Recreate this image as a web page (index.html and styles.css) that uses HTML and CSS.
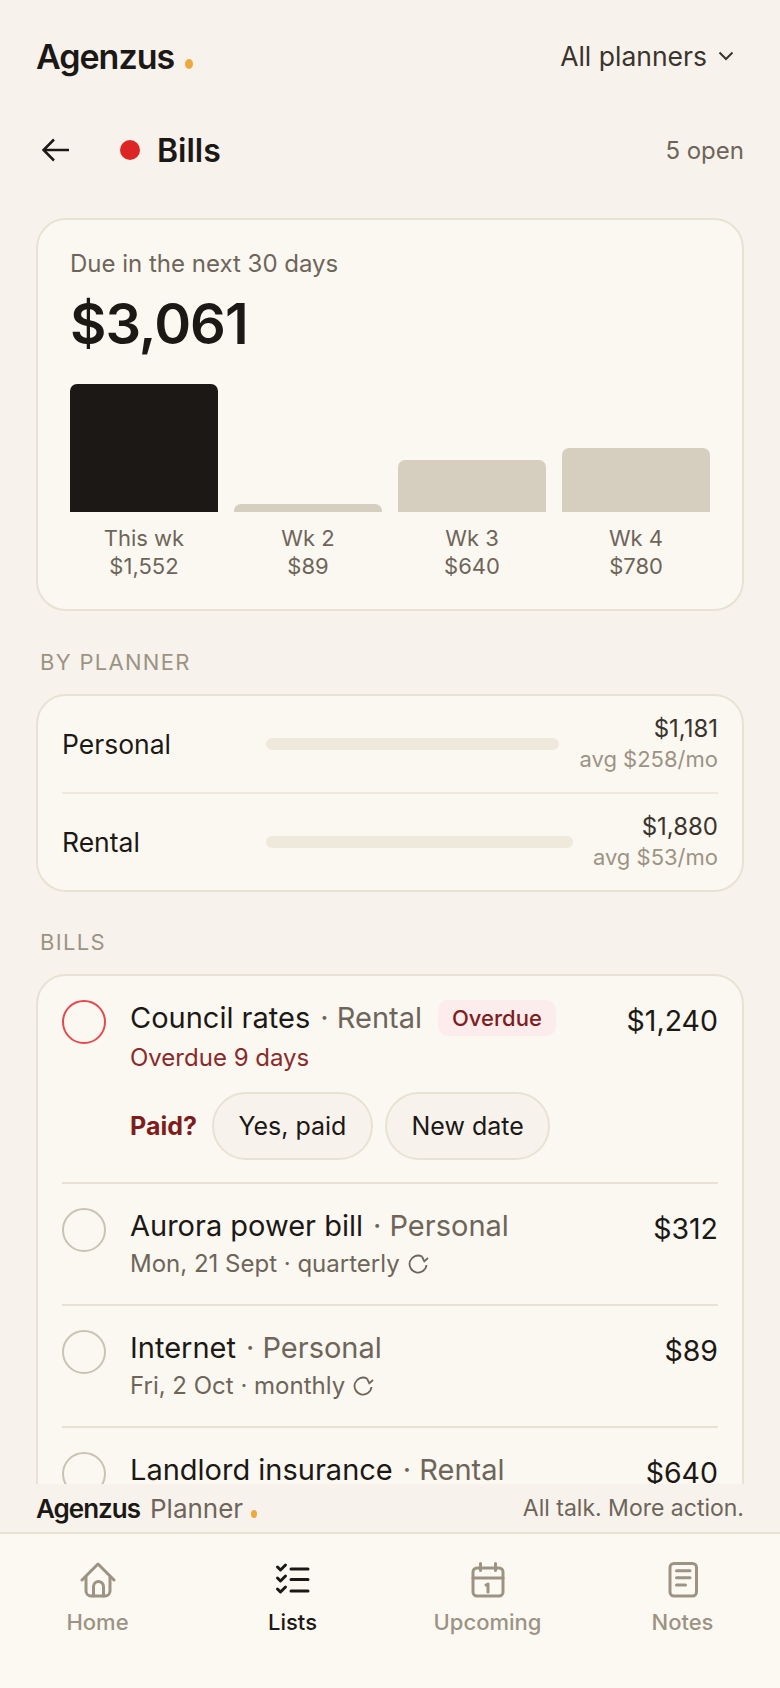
FILE: index.html
```html
<!DOCTYPE html>
<html lang="en">
<head>
    <meta charset="UTF-8">
    <meta name="viewport" content="width=device-width, initial-scale=1.0">
    <title>Agenzus Planner - Bills</title>
    <link rel="stylesheet" href="styles.css">
</head>
<body>
    <div class="main">
        <header class="top-bar">
            <div class="logo">Agenzus<span class="logo-dot"></span></div>
            <div class="planner-select">
                All planners
                <svg class="chevron" viewBox="0 0 16 10"><path d="M1.500 1.500 8 8l6.500-6.500"/></svg>
            </div>
        </header>

        <div class="page-head">
            <svg class="back" viewBox="0 0 28 24"><path d="M27 12H2M12 1.500 1.500 12 12 22.500"/></svg>
            <span class="page-dot"></span>
            <h1>Bills</h1>
            <span class="open-count">5 open</span>
        </div>

        <section class="card summary">
            <div class="summary-label">Due in the next 30 days</div>
            <div class="summary-total">$3,061</div>
            <div class="weeks">
                <div class="week">
                    <div class="bar-wrap"><div class="bar current" style="height: 128px"></div></div>
                    <div class="week-name">This wk</div>
                    <div class="week-amount">$1,552</div>
                </div>
                <div class="week">
                    <div class="bar-wrap"><div class="bar" style="height: 8px"></div></div>
                    <div class="week-name">Wk 2</div>
                    <div class="week-amount">$89</div>
                </div>
                <div class="week">
                    <div class="bar-wrap"><div class="bar" style="height: 52px"></div></div>
                    <div class="week-name">Wk 3</div>
                    <div class="week-amount">$640</div>
                </div>
                <div class="week">
                    <div class="bar-wrap"><div class="bar" style="height: 64px"></div></div>
                    <div class="week-name">Wk 4</div>
                    <div class="week-amount">$780</div>
                </div>
            </div>
        </section>

        <div class="section-label">By planner</div>
        <section class="card planners">
            <div class="planner-row">
                <div class="planner-name">Personal</div>
                <div class="track"></div>
                <div class="planner-nums">
                    <div class="planner-amount">$1,181</div>
                    <div class="planner-avg">avg $258/mo</div>
                </div>
            </div>
            <div class="planner-row">
                <div class="planner-name">Rental</div>
                <div class="track"></div>
                <div class="planner-nums">
                    <div class="planner-amount">$1,880</div>
                    <div class="planner-avg">avg $53/mo</div>
                </div>
            </div>
        </section>

        <div class="section-label bills-label">Bills</div>
        <section class="card bills">
            <div class="bill first">
                <span class="check overdue"></span>
                <div class="bill-body">
                    <div class="bill-title">Council rates <span class="bill-planner">· Rental</span> <span class="badge">Overdue</span></div>
                    <div class="bill-sub late">Overdue 9 days</div>
                    <div class="paid-row">
                        <span class="paid-label">Paid?</span>
                        <button class="pill">Yes, paid</button>
                        <button class="pill">New date</button>
                    </div>
                </div>
                <div class="bill-amount">$1,240</div>
            </div>
            <div class="bill">
                <span class="check"></span>
                <div class="bill-body">
                    <div class="bill-title">Aurora power bill <span class="bill-planner">· Personal</span></div>
                    <div class="bill-sub">Mon, 21 Sept · quarterly
                        <svg class="repeat" viewBox="0 0 21 20"><path d="M18.500 11A8.500 8.500 0 1 1 14 2.500"/><path d="M14 2.500l2.300 4.800L20 4"/></svg>
                    </div>
                </div>
                <div class="bill-amount">$312</div>
            </div>
            <div class="bill">
                <span class="check"></span>
                <div class="bill-body">
                    <div class="bill-title">Internet <span class="bill-planner">· Personal</span></div>
                    <div class="bill-sub">Fri, 2 Oct · monthly
                        <svg class="repeat" viewBox="0 0 21 20"><path d="M18.500 11A8.500 8.500 0 1 1 14 2.500"/><path d="M14 2.500l2.300 4.800L20 4"/></svg>
                    </div>
                </div>
                <div class="bill-amount">$89</div>
            </div>
            <div class="bill">
                <span class="check"></span>
                <div class="bill-body">
                    <div class="bill-title">Landlord insurance <span class="bill-planner">· Rental</span></div>
                </div>
                <div class="bill-amount">$640</div>
            </div>
        </section>
    </div>

    <div class="brand-strip">
        <div class="brand">Agenzus<span class="brand-light">Planner</span><span class="brand-dot"></span></div>
        <div class="tagline">All talk. More action.</div>
    </div>

    <nav class="tab-bar">
        <div class="tab">
            <svg class="tab-icon" viewBox="0 0 36 36"><path d="M2 18 18 2l16 16"/><path d="M6 15v14a5 5 0 0 0 5 5h14a5 5 0 0 0 5-5V15"/><path d="M13.500 34V24.500a5 5 0 0 1 10 0V34"/></svg>
            <span>Home</span>
        </div>
        <div class="tab active">
            <svg class="tab-icon" viewBox="0 0 36 36"><path d="M16 7h17M16 17.500h17M16 29h17"/><path d="M2.500 5l3 3L10.500 3M2.500 16l3 3 5-5M2.500 27l3 3 5-5"/></svg>
            <span>Lists</span>
        </div>
        <div class="tab">
            <svg class="tab-icon" viewBox="0 0 36 36"><rect x="3" y="6" width="30" height="28" rx="4"/><path d="M3 16h30M10.500 1.500v7M25.500 1.500v7M16 23l2-1v8"/></svg>
            <span>Upcoming</span>
        </div>
        <div class="tab">
            <svg class="tab-icon" viewBox="0 0 36 36"><rect x="5" y="1.500" width="26.500" height="32.500" rx="4"/><path d="M11.500 8.700h13.500M11.500 15.700h13.500M11.500 23h9"/></svg>
            <span>Notes</span>
        </div>
    </nav>
</body>
</html>
```
FILE: styles.css
```css
* {
    box-sizing: border-box;
}

body {
    margin: 0;
    height: 1688px;
    display: flex;
    flex-direction: column;
    overflow: hidden;
    font-family: Inter, "Noto Sans", sans-serif;
    background-color: #f7f3ec;
    color: #1c1815;
}

.main {
    flex: 1;
    min-height: 0;
    overflow: hidden;
    padding: 0 36px;
}

/* Top bar */
.top-bar {
    height: 112px;
    display: flex;
    justify-content: space-between;
    align-items: center;
}

.logo {
    font-size: 34px;
    font-weight: 600;
    letter-spacing: -1px;
}

.logo-dot {
    display: inline-block;
    width: 8px;
    height: 10px;
    margin-left: 11px;
    border-radius: 50%;
    background-color: #eda93d;
}

.planner-select {
    display: flex;
    align-items: center;
    gap: 11px;
    font-size: 26.500px;
    color: #3a342d;
}

.chevron {
    width: 16px;
    height: 10px;
    margin-right: 10px;
    fill: none;
    stroke: #3a342d;
    stroke-width: 2;
}

/* Page heading */
.page-head {
    height: 76px;
    display: flex;
    align-items: center;
}

.back {
    width: 28px;
    height: 24px;
    margin-left: 6px;
    fill: none;
    stroke: #1c1815;
    stroke-width: 2.500;
}

.page-dot {
    width: 20px;
    height: 20px;
    margin-left: 50px;
    border-radius: 50%;
    background-color: #dc2626;
}

h1 {
    margin: 0 0 0 17px;
    font-size: 32px;
    font-weight: 600;
}

.open-count {
    margin-left: auto;
    font-size: 24px;
    color: #6e655a;
}

/* Cards */
.card {
    background-color: #fbf8f1;
    border: 2px solid #e8e2d4;
    border-radius: 30px;
}

.summary {
    margin-top: 30px;
    height: 393px;
    padding: 30px 32px 0;
}

.summary-label {
    font-size: 24px;
    line-height: 28px;
    color: #6e655a;
}

.summary-total {
    margin-top: 13px;
    font-size: 56px;
    line-height: 66px;
    font-weight: 600;
    letter-spacing: -1px;
}

.weeks {
    margin-top: 27px;
    display: flex;
    gap: 16px;
}

.week {
    flex: 1;
    text-align: center;
    font-size: 22px;
    line-height: 28px;
    color: #6e655a;
}

.bar-wrap {
    height: 128px;
    margin-bottom: 12px;
    display: flex;
    align-items: flex-end;
}

.bar {
    width: 100%;
    background-color: #d6cfc0;
    border-radius: 7px 7px 0 0;
}

.bar.current {
    background-color: #1c1815;
}

.section-label {
    margin: 39px 0 20px 4px;
    font-size: 22px;
    line-height: 24px;
    letter-spacing: 1.300px;
    text-transform: uppercase;
    color: #9c9384;
}

.bills-label {
    margin-top: 38px;
    margin-bottom: 20px;
}

/* By planner */
.planners {
    padding: 0 24px;
    height: 198px;
}

.planner-row {
    height: 96px;
    display: flex;
    align-items: center;
}

.planner-row + .planner-row {
    height: 98px;
    border-top: 2px solid #efe9dc;
}

.planner-name {
    width: 204px;
    flex-shrink: 0;
    font-size: 26.500px;
}

.track {
    flex: 1;
    height: 12px;
    border-radius: 6px;
    background-color: #efe9dc;
}

.planner-nums {
    margin-left: 20px;
    text-align: right;
}

.planner-amount {
    font-size: 24px;
    line-height: 30px;
    color: #3a342d;
}

.planner-avg {
    font-size: 22px;
    line-height: 30px;
    color: #9c9384;
}

/* Bills */
.bills {
    padding: 0 24px;
}

.bill {
    display: flex;
    padding: 24px 0;
    border-top: 2px solid #e8e2d4;
}

.bill.first {
    padding-bottom: 22px;
    border-top: none;
}

.check {
    width: 44px;
    height: 44px;
    flex-shrink: 0;
    border: 2px solid #c9c3b4;
    border-radius: 50%;
}

.check.overdue {
    border-color: #e5484d;
}

.bill-body {
    flex: 1;
    margin-left: 24px;
}

.bill-title {
    display: flex;
    align-items: center;
    gap: 10px;
    font-size: 29px;
    line-height: 36px;
}

.bill-planner {
    color: #6e655a;
}

.badge {
    margin-left: 6px;
    padding: 0 14px;
    border-radius: 10px;
    font-size: 22px;
    font-weight: 500;
    background-color: #fcecec;
    color: #7f1d1d;
}

.bill-sub {
    margin-top: 4px;
    display: flex;
    align-items: center;
    gap: 8px;
    font-size: 24px;
    line-height: 32px;
    color: #6e655a;
}

.bill-sub.late {
    margin-top: 6px;
    color: #8a2a2a;
}

.repeat {
    width: 21px;
    height: 20px;
    fill: none;
    stroke: #6e655a;
    stroke-width: 1.800;
}

.paid-row {
    margin-top: 18px;
    display: flex;
    align-items: center;
    gap: 12px;
}

.paid-label {
    margin-right: 3px;
    font-size: 25px;
    font-weight: 700;
    color: #7f1d1d;
}

.pill {
    height: 68px;
    padding: 0 24.500px;
    border: 2px solid #e8e2d4;
    border-radius: 34px;
    background-color: #f7f3ec;
    font-family: inherit;
    font-size: 25px;
    color: #1c1815;
}

.bill-amount {
    margin-top: 3px;
    font-size: 28.500px;
    line-height: 36px;
}

/* Footer strip and tabs */
.brand-strip {
    height: 48px;
    flex-shrink: 0;
    padding: 0 36px;
    display: flex;
    justify-content: space-between;
    align-items: center;
}

.brand {
    font-size: 26px;
    font-weight: 600;
    letter-spacing: -1px;
}

.brand-light {
    margin-left: 10px;
    font-weight: 400;
    letter-spacing: 0;
    color: #6e655a;
}

.brand-dot {
    display: inline-block;
    width: 6px;
    height: 8px;
    margin-left: 8px;
    border-radius: 50%;
    background-color: #eda93d;
}

.tagline {
    font-size: 23px;
    color: #6e655a;
}

.tab-bar {
    height: 156px;
    flex-shrink: 0;
    padding-top: 28px;
    display: flex;
    border-top: 2px solid #e8e2d4;
    background-color: #fcf9f3;
}

.tab {
    flex: 1;
    display: flex;
    flex-direction: column;
    align-items: center;
    gap: 11px;
    font-size: 22px;
    font-weight: 500;
    color: #9c9384;
}

.tab.active {
    color: #1c1815;
}

.tab-icon {
    width: 36px;
    height: 36px;
    fill: none;
    stroke: currentColor;
    stroke-width: 3;
    stroke-linecap: round;
    stroke-linejoin: round;
}
```
